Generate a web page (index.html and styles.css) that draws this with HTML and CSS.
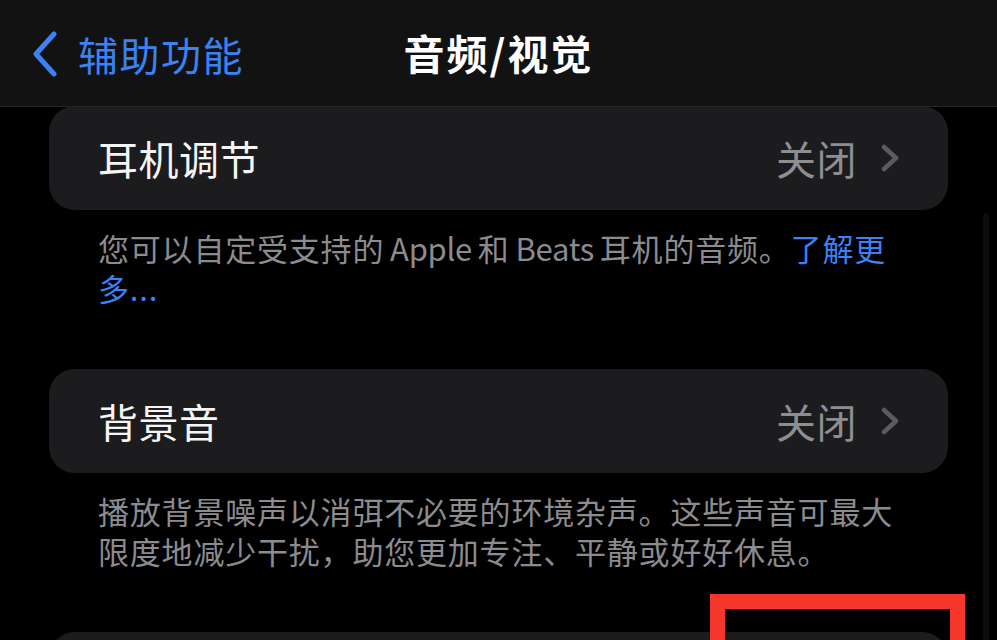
FILE: index.html
```html
<!DOCTYPE html>
<html lang="zh-CN">
<head>
<meta charset="utf-8">
<title>音频/视觉</title>
<link rel="stylesheet" href="styles.css">
</head>
<body>
<div class="screen">
  <header class="nav">
    <a class="back">
      <svg class="back-icon" viewBox="0 0 26 46" width="26" height="46"><path d="M22 3 L4 23 L22 43" fill="none" stroke="#3b82f6" stroke-width="5" stroke-linecap="round" stroke-linejoin="round"/></svg>
      <span class="back-text">辅助功能</span>
    </a>
    <h1 class="title">音频/视觉</h1>
  </header>
  <main class="content">
    <section class="group">
      <div class="card">
        <span class="row-label">耳机调节</span>
        <span class="row-value">关闭
          <svg class="chev" viewBox="0 0 20 28" width="20" height="28"><path d="M3 3 L15 14 L3 25" fill="none" stroke="#5c5c60" stroke-width="4.5" stroke-linecap="round" stroke-linejoin="round"/></svg>
        </span>
      </div>
      <p class="footer">您可以自定受支持的<span class="latin">&#8201;Apple&#8201;</span>和<span class="latin">&#8201;Beats&#8201;</span>耳机的音频。<span class="link">了解更多...</span></p>
    </section>
    <section class="group">
      <div class="card">
        <span class="row-label">背景音</span>
        <span class="row-value">关闭
          <svg class="chev" viewBox="0 0 20 28" width="20" height="28"><path d="M3 3 L15 14 L3 25" fill="none" stroke="#5c5c60" stroke-width="4.5" stroke-linecap="round" stroke-linejoin="round"/></svg>
        </span>
      </div>
      <p class="footer">播放背景噪声以消弭不必要的环境杂声。这些声音可最大限度地减少干扰，助您更加专注、平静或好好休息。</p>
    </section>
    <section class="group">
      <div class="card"></div>
    </section>
  </main>
  <div class="scrollbar"></div>
  <div class="highlight"></div>
</div>
</body>
</html>
```
FILE: styles.css
```css
* { box-sizing: border-box; }
html, body { margin: 0; padding: 0; background: #000; }
body {
  font-family: "Noto Sans CJK SC", "Noto Sans", sans-serif;
  color: #fff;
}
.screen {
  position: relative;
  width: 997px;
  height: 640px;
  overflow: hidden;
  background: #000;
}
.nav {
  position: relative;
  height: 107px;
  background: #121212;
  border-bottom: 1px solid #262626;
  display: flex;
  align-items: center;
  justify-content: center;
  z-index: 2;
}
.back {
  position: absolute;
  left: 32px;
  top: 31px;
  display: flex;
  align-items: center;
  gap: 20px;
  color: #3b82f6;
}
.back-text {
  font-size: 40px;
  line-height: 46px;
  font-weight: 400;
  letter-spacing: 1.5px;
}
.title {
  margin: 0;
  font-size: 41px;
  font-weight: 700;
  line-height: 46px;
  letter-spacing: 2px;
  margin-top: -2px;
}
.content {
  padding: 0 49px;
  margin-top: -1px;
}
.group { margin-bottom: 61px; }
.card {
  height: 104px;
  background: #1c1c1e;
  border-radius: 26px;
  display: flex;
  align-items: center;
  justify-content: space-between;
  padding: 0 47px 0 49px;
}
.row-label {
  font-size: 40px;
  letter-spacing: 0.5px;
  color: #f5f5f5;
}
.row-value {
  display: flex;
  align-items: center;
  gap: 24px;
  font-size: 40px;
  color: #8d8d92;
  letter-spacing: 0.5px;
}
.chev { display: block; }
.footer {
  margin: 0;
  padding: 18px 48px 0 49px;
  font-size: 31px;
  line-height: 40px;
  color: #8b8b90;
  letter-spacing: 0.8px;
}
.latin { letter-spacing: -0.3px; }
.link { color: #3b82f6; }
.scrollbar {
  position: absolute;
  right: 8px;
  top: 213px;
  width: 6px;
  height: 440px;
  border-radius: 3px;
  background: #0d0d0d;
}
.highlight {
  position: absolute;
  left: 710px;
  top: 594px;
  width: 255px;
  height: 80px;
  border: 15px solid #f4362b;
  z-index: 3;
}
```
